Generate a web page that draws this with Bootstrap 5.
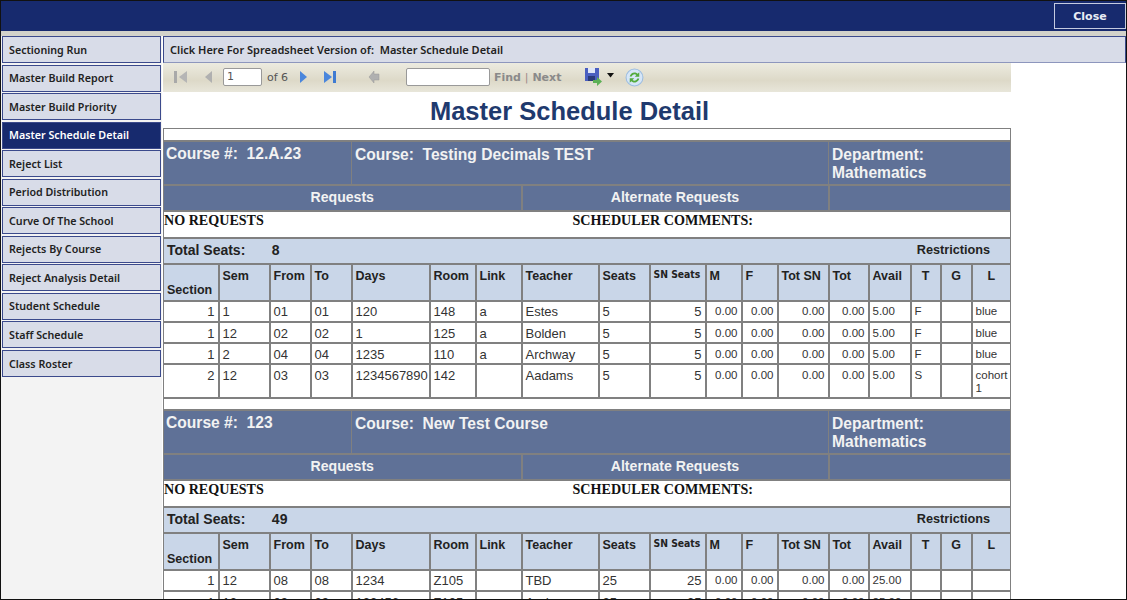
<!DOCTYPE html>
<html lang="en"><head><meta charset="utf-8"><title>Master Schedule Detail</title>
<link rel="stylesheet" href="https://cdn.jsdelivr.net/npm/bootstrap@5.3.0/dist/css/bootstrap.min.css">
<style>
html,body{height:100%;margin:0;overflow:hidden;background:#fff}
.frame{height:600px;border:1px solid #111;overflow:hidden;display:flex;flex-direction:column;background:#fff}
.topbar{height:35px;background:#172a6e;border-bottom:5px solid #d2d2ca;flex:none}
.close-btn{width:72px;height:26px;margin:2px 0 0;border:1px solid #c5cbe0;border-radius:0;background:#172a6e;color:#e8ecf5;font:bold 11px/1 "DejaVu Sans",sans-serif;padding:0}
.side{width:161px;flex:none;background:#f3f3f3;padding:0 1px 0 1px;gap:1.55px}
.side-link{height:27px;border:1px solid #3b4a8c;background:#d8dce8;color:#222;font:600 10.7px/25px "Noto Sans",sans-serif;padding:.5px 0 0 6px;text-decoration:none;display:block;white-space:nowrap}
.side-link.cur{background:#172a6e;color:#fff}
.content{min-width:0;background:#fff}
.sheet-bar{height:27px;margin:0 0 0 1px;border:1px solid #3b4a8c;border-bottom-color:#8d96bd;background:#d8dce8;color:#222;font:600 11px/25px "Noto Sans",sans-serif;padding-left:6px;white-space:pre}
.report{width:848px;margin-left:1px}
.tools{height:29px;background:linear-gradient(#ecebe0,#ddd9c8 60%,#e8e6da);font:11px "DejaVu Sans",sans-serif;color:#555;position:relative}
.tools svg{position:absolute;display:block}
.tools .t{position:absolute;top:8px;white-space:nowrap}
.box{position:absolute;top:5px;height:18px;background:#fff;border:1px solid #999;border-radius:2px;font:11px "DejaVu Sans",sans-serif;padding:1px 3px;line-height:14px}
.rep-title{font:bold 25.5px/38px "Liberation Sans",sans-serif;color:#1f3a6e;text-align:center;margin:0;height:36px;padding-right:35px}
.grid{table-layout:fixed;width:847px;border-collapse:collapse;background:#fff;color:#333;font:13px/14px "Liberation Sans",sans-serif;margin:0}
.grid td,.grid th{border:2px solid #808080;padding:0 3px;vertical-align:top;overflow:hidden}
.grid td:first-child,.grid th:first-child{border-left-width:1px}
.grid td:last-child,.grid th:last-child{border-right-width:1px}
.grid tr.sp td{border:1px solid #808080;padding:0}
.grid tr.sp{height:12px}
.grid tr.course{height:44px}
.grid tr.course td{background:#5f7197;color:#f2f2f2;font:bold 15.6px/18px "Liberation Sans",sans-serif;padding:4px 3px 2px;border-width:2px 1px;white-space:pre-wrap}
.grid tr.course td:first-child{padding:3px 2px}
.grid tr.req{height:26px}
.grid tr.req td{background:#5f7197;color:#f2f2f2;font:bold 14.1px/22px "Liberation Sans",sans-serif;text-align:center;padding:0}
.grid tr.note{height:27px}
.grid tr.note td{border-left:1px solid #808080;border-right:1px solid #808080;font:bold 14.1px/16px "Liberation Serif",serif;color:#111;padding:0}
.grid tr.note td:first-child{border-right:0}
.grid tr.note td.sch{padding-left:51px;border-left:0}
.grid tr.total{height:26px}
.grid tr.total td{background:#c9d6e8;color:#222;font:bold 14px/22px "Liberation Sans",sans-serif;padding:0 20px 0 3px}
.restr{font-size:12.7px}
.seat-n{display:inline-block;margin-left:11px;font-size:14px}
.grid tr.hd{height:37px}
.grid tr.hd th{background:#c9d6e8;color:#222;font:bold 12.5px/15px "Liberation Sans",sans-serif;padding:4px 3px 0;white-space:nowrap}
.grid tr.hd th.sec{vertical-align:bottom;padding:0 0 2px 3px}
.grid tr.hd th.mid{text-align:center}
.grid tr.hd th.sn{font:bold 10.3px/13px "DejaVu Sans Condensed","DejaVu Sans",sans-serif;padding:3px 0 0 3px}
.grid tr.r1{height:21px}.grid tr.r3{height:34px}
.grid td{padding-top:4px}
.grid tr.hd + tr td{padding-top:3px}
.num{text-align:right}
.sm{font-size:11.5px;line-height:13px}
</style></head><body>
<div class="frame">
<div class="topbar d-flex justify-content-end"><button class="btn close-btn" type="button">Close</button></div>
<div class="d-flex flex-grow-1" style="min-height:0">
<nav class="side d-flex flex-column">
<a class="side-link" href="#">Sectioning Run</a>
<a class="side-link" href="#">Master Build Report</a>
<a class="side-link" href="#">Master Build Priority</a>
<a class="side-link cur" href="#">Master Schedule Detail</a>
<a class="side-link" href="#">Reject List</a>
<a class="side-link" href="#">Period Distribution</a>
<a class="side-link" href="#">Curve Of The School</a>
<a class="side-link" href="#">Rejects By Course</a>
<a class="side-link" href="#">Reject Analysis Detail</a>
<a class="side-link" href="#">Student Schedule</a>
<a class="side-link" href="#">Staff Schedule</a>
<a class="side-link" href="#">Class Roster</a>
</nav>
<main class="content flex-grow-1">
<div class="sheet-bar">Click Here For Spreadsheet Version of:  Master Schedule Detail</div>
<div class="report">
<div class="tools">
<svg style="left:10px;top:7px" width="15" height="14" viewBox="0 0 15 14"><rect x="1" y="1" width="3" height="12" fill="#a9a9a9"/><path d="M14 1v12L6 7z" fill="#b5b5b5"/></svg>
<svg style="left:41px;top:7px" width="9" height="14" viewBox="0 0 9 14"><path d="M8 1v12L1 7z" fill="#b0b0b0"/></svg>
<div class="box" style="left:60px;width:39px">1</div>
<span class="t" style="left:104px">of 6</span>
<svg style="left:136px;top:7px" width="9" height="14" viewBox="0 0 9 14"><path d="M1 1v12l7-6z" fill="#4a86dc"/></svg>
<svg style="left:160px;top:7px" width="15" height="14" viewBox="0 0 15 14"><path d="M1 1v12l8-6z" fill="#4a86dc"/><rect x="10" y="1" width="3" height="12" fill="#3f7bd2"/></svg>
<svg style="left:205px;top:7px" width="12" height="14" viewBox="0 0 12 14"><path d="M6 1v3h5v6H6v3L1 7z" fill="#b0b0b0" stroke="#999" stroke-width=".5"/></svg>
<div class="box" style="left:243px;width:84px"></div>
<span class="t" style="left:331px;font-weight:bold;color:#8a8a8a">Find <span style="color:#a08a8a;font-weight:normal">|</span> Next</span>
<svg style="left:421px;top:4px" width="20" height="20" viewBox="0 0 20 20"><path d="M1 1h14v13H1z" fill="#4a5fc0"/><rect x="4" y="1" width="7" height="5" fill="#dfe6f7"/><rect x="4" y="9" width="7" height="5" fill="#2a3a7a"/><path d="M9 13h4v-3l5 4.500-5 4.500v-3H9z" fill="#5cb055"/></svg>
<svg style="left:444px;top:10px" width="7" height="5" viewBox="0 0 7 5"><path d="M0 0h7L3.500 4.500z" fill="#111"/></svg>
<svg style="left:462px;top:5px" width="19" height="19" viewBox="0 0 18 18"><circle cx="9" cy="9" r="8" fill="#d6e6f7" stroke="#9cbde0"/><path d="M4.500 8a4.600 4.600 0 0 1 7.500-2.600L13.500 4v4.200H9.300l1.500-1.500A2.800 2.800 0 0 0 6.300 8z" fill="#53ab3d"/><path d="M13.500 10a4.600 4.600 0 0 1-7.500 2.600L4.500 14V9.800h4.200l-1.500 1.500a2.800 2.800 0 0 0 4.500-1.300z" fill="#53ab3d"/></svg>
</div>
<h1 class="rep-title">Master Schedule Detail</h1>
<table class="grid">
<colgroup><col style="width:55px"><col style="width:51px"><col style="width:41px"><col style="width:41px"><col style="width:78px"><col style="width:46px"><col style="width:46px"><col style="width:77px"><col style="width:51px"><col style="width:56px"><col style="width:36px"><col style="width:36px"><col style="width:51px"><col style="width:40px"><col style="width:42px"><col style="width:30px"><col style="width:31px"><col style="width:39px"></colgroup>
<tbody>
<tr class="sp"><td colspan="18"></td></tr>
<tr class="course"><td colspan="4">Course #:  12.A.23</td><td colspan="9">Course:  Testing Decimals TEST</td><td colspan="5">Department: Mathematics</td></tr>
<tr class="req"><td colspan="7">Requests</td><td colspan="6">Alternate Requests</td><td colspan="5"></td></tr>
<tr class="note"><td colspan="7">NO REQUESTS</td><td colspan="11" class="sch">SCHEDULER COMMENTS:</td></tr>
<tr class="total"><td colspan="18"><div class="d-flex justify-content-between"><span>Total Seats: <span class="seat-n">&nbsp;&nbsp;&nbsp;8</span></span><span class="restr">Restrictions</span></div></td></tr>
<tr class="hd"><th class="sec">Section</th><th>Sem</th><th>From</th><th>To</th><th>Days</th><th>Room</th><th>Link</th><th>Teacher</th><th>Seats</th><th class="sn">SN Seats</th><th>M</th><th>F</th><th>Tot SN</th><th>Tot</th><th>Avail</th><th class="mid">T</th><th class="mid">G</th><th class="mid">L</th></tr>
<tr class="r1"><td class="num">1</td><td>1</td><td>01</td><td>01</td><td>120</td><td>148</td><td>a</td><td>Estes</td><td>5</td><td class="num">5</td><td class="num sm">0.00</td><td class="num sm">0.00</td><td class="num sm">0.00</td><td class="num sm">0.00</td><td class="sm">5.00</td><td class="sm">F</td><td></td><td class="sm">blue</td></tr>
<tr class="r1"><td class="num">1</td><td>12</td><td>02</td><td>02</td><td>1</td><td>125</td><td>a</td><td>Bolden</td><td>5</td><td class="num">5</td><td class="num sm">0.00</td><td class="num sm">0.00</td><td class="num sm">0.00</td><td class="num sm">0.00</td><td class="sm">5.00</td><td class="sm">F</td><td></td><td class="sm">blue</td></tr>
<tr class="r1"><td class="num">1</td><td>2</td><td>04</td><td>04</td><td>1235</td><td>110</td><td>a</td><td>Archway</td><td>5</td><td class="num">5</td><td class="num sm">0.00</td><td class="num sm">0.00</td><td class="num sm">0.00</td><td class="num sm">0.00</td><td class="sm">5.00</td><td class="sm">F</td><td></td><td class="sm">blue</td></tr>
<tr class="r3"><td class="num">2</td><td>12</td><td>03</td><td>03</td><td>1234567890</td><td>142</td><td></td><td>Aadams</td><td>5</td><td class="num">5</td><td class="num sm">0.00</td><td class="num sm">0.00</td><td class="num sm">0.00</td><td class="num sm">0.00</td><td class="sm">5.00</td><td class="sm">S</td><td></td><td class="sm">cohort 1</td></tr>
<tr class="sp"><td colspan="18"></td></tr>
<tr class="course"><td colspan="4">Course #:  123</td><td colspan="9">Course:  New Test Course</td><td colspan="5">Department: Mathematics</td></tr>
<tr class="req"><td colspan="7">Requests</td><td colspan="6">Alternate Requests</td><td colspan="5"></td></tr>
<tr class="note"><td colspan="7">NO REQUESTS</td><td colspan="11" class="sch">SCHEDULER COMMENTS:</td></tr>
<tr class="total"><td colspan="18"><div class="d-flex justify-content-between"><span>Total Seats: <span class="seat-n">&nbsp;&nbsp;&nbsp;49</span></span><span class="restr">Restrictions</span></div></td></tr>
<tr class="hd"><th class="sec">Section</th><th>Sem</th><th>From</th><th>To</th><th>Days</th><th>Room</th><th>Link</th><th>Teacher</th><th>Seats</th><th class="sn">SN Seats</th><th>M</th><th>F</th><th>Tot SN</th><th>Tot</th><th>Avail</th><th class="mid">T</th><th class="mid">G</th><th class="mid">L</th></tr>
<tr class="r1"><td class="num">1</td><td>12</td><td>08</td><td>08</td><td>1234</td><td>Z105</td><td></td><td>TBD</td><td>25</td><td class="num">25</td><td class="num sm">0.00</td><td class="num sm">0.00</td><td class="num sm">0.00</td><td class="num sm">0.00</td><td class="sm">25.00</td><td></td><td></td><td></td></tr>
<tr class="r1"><td class="num">1</td><td>12</td><td>09</td><td>09</td><td>123456</td><td>Z105</td><td></td><td>Andrews</td><td>25</td><td class="num">25</td><td class="num sm">0.00</td><td class="num sm">0.00</td><td class="num sm">0.00</td><td class="num sm">0.00</td><td class="sm">25.00</td><td></td><td></td><td></td></tr>
</tbody></table>
</div>
</main>
</div>
</div>
<script src="https://cdn.jsdelivr.net/npm/bootstrap@5.3.0/dist/js/bootstrap.bundle.min.js"></script>
</body></html>
